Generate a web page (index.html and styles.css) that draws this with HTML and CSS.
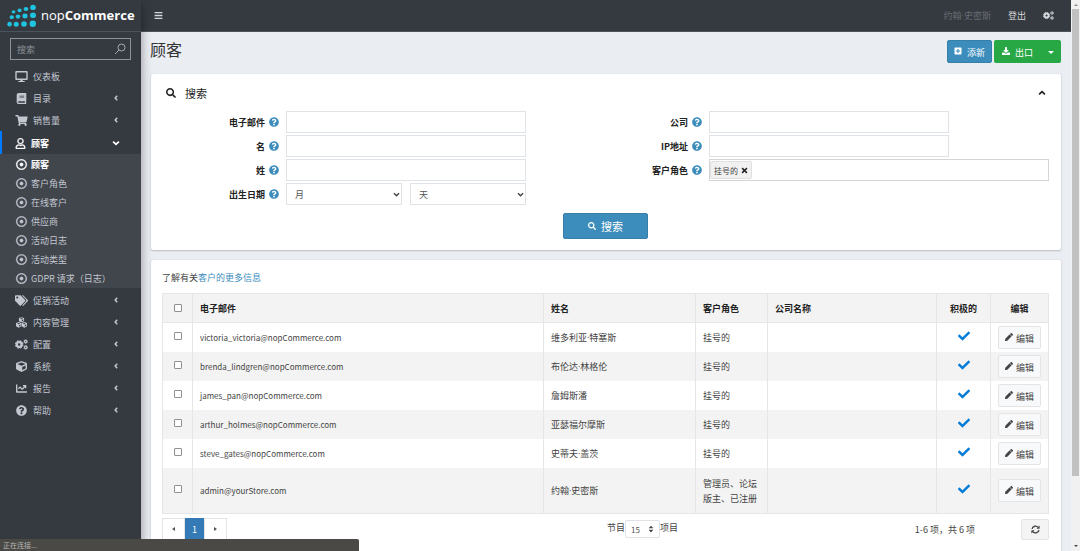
FILE: index.html
```html
<!DOCTYPE html>
<html lang="zh-CN">

<head>
    <meta charset="UTF-8">
    <meta name="viewport" content="width=device-width, initial-scale=1.0">
    <title>顾客 / nopCommerce</title>

    <link rel="stylesheet" href="styles.css">
</head>

<body>

    <!-- icons -->
    <svg class="sprite" aria-hidden="true">
        <symbol id="i-search" viewBox="0 0 512 512"><path d="M505 442.7L405.3 343c-4.5-4.5-10.6-7-17-7H372c27.6-35.3 44-79.7 44-128C416 93.1 322.9 0 208 0S0 93.1 0 208s93.1 208 208 208c48.3 0 92.7-16.4 128-44v16.3c0 6.4 2.5 12.5 7 17l99.7 99.7c9.4 9.4 24.6 9.4 33.9 0l28.3-28.3c9.4-9.4 9.4-24.6.1-34zM208 336c-70.7 0-128-57.2-128-128 0-70.7 57.2-128 128-128 70.7 0 128 57.2 128 128 0 70.7-57.2 128-128 128z"/></symbol>
        <symbol id="i-help" viewBox="0 0 512 512"><path d="M504 256c0 136.997-111.043 248-248 248S8 392.997 8 256C8 119.083 119.043 8 256 8s248 111.083 248 248zM262.655 90c-54.497 0-89.255 22.957-116.549 63.758-3.536 5.286-2.353 12.415 2.715 16.258l34.699 26.31c5.205 3.947 12.621 3.008 16.665-2.122 17.864-22.658 30.113-35.797 57.303-35.797 20.429 0 45.698 13.148 45.698 32.958 0 14.976-12.363 22.667-32.534 33.976C247.128 238.528 216 254.941 216 296v4c0 6.627 5.373 12 12 12h56c6.627 0 12-5.373 12-12v-1.333c0-28.462 83.186-29.647 83.186-106.667 0-58.002-60.165-102-116.531-102zM256 338c-25.365 0-46 20.635-46 46 0 25.364 20.635 46 46 46s46-20.636 46-46c0-25.365-20.635-46-46-46z"/></symbol>
        <symbol id="i-check" viewBox="0 0 512 512"><path d="M173.898 439.404l-166.4-166.4c-9.997-9.997-9.997-26.206 0-36.204l36.203-36.204c9.997-9.998 26.207-9.998 36.204 0L192 312.69 432.095 72.596c9.997-9.997 26.207-9.997 36.204 0l36.203 36.204c9.997 9.997 9.997 26.206 0 36.204l-294.4 294.401c-9.998 9.997-26.207 9.997-36.204-.001z"/></symbol>
        <symbol id="i-dot" viewBox="0 0 512 512"><path d="M256 56c110.532 0 200 89.451 200 200 0 110.532-89.451 200-200 200-110.532 0-200-89.451-200-200 0-110.532 89.451-200 200-200m0-48C119.033 8 8 119.033 8 256s111.033 248 248 248 248-111.033 248-248S392.967 8 256 8zm0 168c-44.183 0-80 35.817-80 80s35.817 80 80 80 80-35.817 80-80-35.817-80-80-80z" stroke="currentColor" stroke-width="14"/></symbol>
        <symbol id="i-bars" viewBox="0 0 448 512"><path d="M16 60h416q16 0 16 16v40q0 16-16 16H16q-16 0-16-16V76q0-16 16-16zm0 160h416q16 0 16 16v40q0 16-16 16H16q-16 0-16-16v-40q0-16 16-16zm0 160h416q16 0 16 16v40q0 16-16 16H16q-16 0-16-16v-40q0-16 16-16z"/></symbol>
        <symbol id="i-desktop" viewBox="0 0 576 512"><path d="M528 0H48C21.5 0 0 21.5 0 48v320c0 26.5 21.5 48 48 48h192l-16 48h-72c-13.3 0-24 10.7-24 24s10.7 24 24 24h272c13.3 0 24-10.7 24-24s-10.7-24-24-24h-72l-16-48h192c26.5 0 48-21.5 48-48V48c0-26.5-21.5-48-48-48zm-16 352H64V64h448v288z"/></symbol>
        <symbol id="i-book" viewBox="0 0 448 512"><path d="M448 360V24c0-13.3-10.7-24-24-24H96C43 0 0 43 0 96v320c0 53 43 96 96 96h328c13.3 0 24-10.7 24-24v-16c0-7.5-3.5-14.3-8.9-18.7-4.2-15.4-4.2-59.3 0-74.7 5.4-4.3 8.9-11.1 8.9-18.6zM128 134c0-3.3 2.7-6 6-6h212c3.3 0 6 2.7 6 6v20c0 3.3-2.7 6-6 6H134c-3.3 0-6-2.7-6-6v-20zm0 64c0-3.3 2.7-6 6-6h212c3.3 0 6 2.7 6 6v20c0 3.3-2.7 6-6 6H134c-3.3 0-6-2.7-6-6v-20zm253.4 250H96c-17.7 0-32-14.3-32-32 0-17.6 14.4-32 32-32h285.4c-1.9 17.1-1.9 46.9 0 64z"/></symbol>
        <symbol id="i-cart" viewBox="0 0 576 512"><path d="M528.12 301.319l47.273-208C578.806 78.301 567.391 64 551.99 64H159.208l-9.166-44.81C147.758 8.021 137.93 0 126.529 0H24C10.745 0 0 10.745 0 24v16c0 13.255 10.745 24 24 24h69.883l70.248 343.435C147.325 417.1 136 435.222 136 456c0 30.928 25.072 56 56 56s56-25.072 56-56c0-15.674-6.447-29.835-16.824-40h209.647C430.447 426.165 424 440.326 424 456c0 30.928 25.072 56 56 56s56-25.072 56-56c0-22.172-12.888-41.332-31.579-50.405l5.517-24.276c3.413-15.018-8.002-29.319-23.403-29.319H218.117l-6.545-32h293.145c11.206 0 20.92-7.754 23.403-18.681z"/></symbol>
        <symbol id="i-user" viewBox="0 0 448 512"><path d="M313.6 304c-28.7 0-42.5 16-89.6 16-47.1 0-60.8-16-89.6-16C60.2 304 0 364.2 0 438.4V464c0 26.5 21.5 48 48 48h352c26.5 0 48-21.5 48-48v-25.6c0-74.2-60.2-134.4-134.4-134.4zM400 464H48v-25.6c0-47.6 38.8-86.4 86.4-86.4 14.6 0 38.3 16 89.6 16 51.7 0 74.9-16 89.6-16 47.6 0 86.4 38.8 86.4 86.4V464zM224 288c79.5 0 144-64.5 144-144S303.5 0 224 0 80 64.5 80 144s64.5 144 144 144zm0-240c52.9 0 96 43.1 96 96s-43.1 96-96 96-96-43.1-96-96 43.1-96 96-96z" stroke="currentColor" stroke-width="16"/></symbol>
        <symbol id="i-tags" viewBox="0 0 640 512"><path d="M497.941 225.941L286.059 14.059A48 48 0 0 0 252.118 0H48C21.49 0 0 21.49 0 48v204.118a48 48 0 0 0 14.059 33.941l211.882 211.882c18.744 18.745 49.136 18.746 67.882 0l204.118-204.118c18.745-18.745 18.745-49.137 0-67.882zM112 160c-26.51 0-48-21.49-48-48s21.49-48 48-48 48 21.49 48 48-21.49 48-48 48zm513.941 133.823L421.823 497.941c-18.745 18.745-49.137 18.745-67.882 0l-.36-.36L527.64 323.522c16.999-16.999 26.362-39.6 26.362-63.64s-9.362-46.641-26.362-63.64L331.397 0h48.721a48 48 0 0 1 33.941 14.059l211.882 211.882c18.745 18.745 18.745 49.137 0 67.882z"/></symbol>
        <symbol id="i-cube" viewBox="0 0 512 512"><path d="M239.1 6.3l-208 78c-18.7 7-31.1 25-31.1 45v225.1c0 18.2 10.3 34.8 26.5 42.9l208 104c13.5 6.8 29.4 6.8 42.9 0l208-104c16.3-8.1 26.5-24.8 26.5-42.9V129.3c0-20-12.4-37.9-31.1-44.9l-208-78C262 2.2 250 2.2 239.1 6.3zM256 68.4l192 72v1.1l-192 78-192-78v-1.1l192-72zm32 356V275.5l160-65v133.9l-160 80z"/></symbol>
        <symbol id="i-cubes" viewBox="0 0 512 512">
            <path fill-rule="evenodd" d="M256 6l120 46v140l-120 56-120-56V52zM256 48l-70 26 70 28 70-28zM276 200l62-30V110l-62 26zM124 232l124 50v150L124 496 0 432V282zM124 276l-72 28 72 30 72-30zM146 444l64-32v-66l-64 28zM388 232l124 50v150l-124 64-124-64V282zM388 276l-72 28 72 30 72-30zM410 444l64-32v-66l-64 28z"/>
        </symbol>
        <symbol id="i-cogs" viewBox="0 0 640 512">
            <g fill="none" stroke="currentColor">
                <circle cx="206" cy="256" r="116" stroke-width="110"/>
                <circle cx="206" cy="256" r="180" stroke-width="56" stroke-dasharray="90 51.4"/>
                <circle cx="524" cy="112" r="62" stroke-width="56"/>
                <circle cx="524" cy="112" r="96" stroke-width="32" stroke-dasharray="56 44.500"/>
                <circle cx="524" cy="400" r="62" stroke-width="56"/>
                <circle cx="524" cy="400" r="96" stroke-width="32" stroke-dasharray="56 44.500"/>
            </g>
        </symbol>
        <symbol id="i-chart" viewBox="0 0 512 512"><path d="M496 384H64V80c0-8.84-7.16-16-16-16H16C7.16 64 0 71.16 0 80v336c0 17.67 14.33 32 32 32h464c8.84 0 16-7.16 16-16v-32c0-8.84-7.16-16-16-16zM464 96H345.94c-21.38 0-32.09 25.85-16.97 40.97l32.4 32.4L288 242.75l-73.37-73.37c-12.5-12.5-32.76-12.5-45.25 0l-68.69 68.69c-6.25 6.25-6.25 16.38 0 22.63l22.62 22.62c6.25 6.25 16.38 6.25 22.63 0L192 237.25l73.37 73.37c12.5 12.5 32.76 12.5 45.25 0l96-96 32.4 32.4c15.12 15.12 40.97 4.41 40.97-16.97V112c.01-8.84-7.15-16-15.99-16z"/></symbol>
        <symbol id="i-pencil" viewBox="0 0 512 512"><path d="M497.9 142.1l-46.1 46.1c-4.7 4.7-12.3 4.7-17 0l-111-111c-4.7-4.7-4.7-12.3 0-17l46.1-46.1c18.7-18.7 49.1-18.7 67.9 0l60.1 60.1c18.8 18.7 18.8 49.1 0 67.9zM284.2 99.8L21.6 362.4.4 483.9c-2.9 16.4 11.4 30.6 27.8 27.8l121.5-21.3 262.6-262.6c4.7-4.7 4.7-12.3 0-17l-111-111c-4.8-4.7-12.4-4.7-17.1 0z"/></symbol>
        <symbol id="i-plus" viewBox="0 0 448 512"><path fill-rule="evenodd" d="M48 32h352q48 0 48 48v352q0 48-48 48H48q-48 0-48-48V80q0-48 48-48zm140 92v96H92v72h96v96h72v-96h96v-72h-96v-96z"/></symbol>
        <symbol id="i-download" viewBox="0 0 512 512"><path d="M216 0h80q24 0 24 24v168h88q26 0 11 31L271 371q-15 13-30 0L93 223q-15-31 11-31h88V24q0-24 24-24zM24 352h123l49 49q60 50 120 0l49-49h123q24 0 24 24v112q0 24-24 24H24q-24 0-24-24V376q0-24 24-24z"/></symbol>
        <symbol id="i-left" viewBox="0 0 256 512"><path d="M206 116L76 256l130 140" fill="none" stroke="currentColor" stroke-width="96"/></symbol>
        <symbol id="i-down" viewBox="0 0 512 512"><path d="M70 170l186 176 186-176" fill="none" stroke="currentColor" stroke-width="110"/></symbol>
        <symbol id="i-up" viewBox="0 0 512 512"><path d="M70 346l186-176 186 176" fill="none" stroke="currentColor" stroke-width="110"/></symbol>
        <symbol id="i-times" viewBox="0 0 512 512"><path d="M80 80l352 352M432 80L80 432" fill="none" stroke="currentColor" stroke-width="110"/></symbol>
        <symbol id="i-sync" viewBox="0 0 512 512"><path d="M60 226A198 198 0 0 1 410 138M452 286A198 198 0 0 1 102 374" fill="none" stroke="currentColor" stroke-width="80"/><path d="M490 30v180H310zM22 482V302h180z"/></symbol>
        <symbol id="i-sort" viewBox="0 0 320 512"><path d="M160 40l150 170H10zM160 472L10 302h300z"/></symbol>
    </svg>

    <div class="wrapper">

        <!-- sidebar -->
        <aside class="sidebar">
            <a class="brand" href="#">
                <svg class="brand-mark" viewBox="0 0 30 24" aria-hidden="true">
                    <g fill="#1fc3df">
                        <ellipse cx="6.5" cy="7.8" rx="1.900" ry="1.600"/><ellipse cx="12.6" cy="6.4" rx="2.1" ry="1.800"/><ellipse cx="19" cy="5" rx="2.400" ry="2.1"/><ellipse cx="26" cy="3.4" rx="2.800" ry="2.600"/>
                        <ellipse cx="4.8" cy="13.200" rx="2.1" ry="1.900"/><ellipse cx="11" cy="12.6" rx="2.300" ry="2.1"/><ellipse cx="18" cy="12" rx="2.600" ry="2.400"/><ellipse cx="26" cy="11.2" rx="3" ry="2.800"/>
                        <ellipse cx="2.6" cy="20.200" rx="2.300" ry="2.400"/><ellipse cx="9.2" cy="20.200" rx="2.500" ry="2.500"/><ellipse cx="17" cy="20" rx="2.800" ry="2.800"/><ellipse cx="25.8" cy="19.800" rx="3.200" ry="3.200"/>
                    </g>
                </svg>
                <span>nop<b>Commerce</b></span>
            </a>

            <form class="side-search">
                <input type="text" placeholder="搜索" aria-label="搜索">
                <svg viewBox="0 0 12 12" aria-hidden="true"><path d="M1 11l4-4M11 4.500a3.500 3.500 0 1 1-7 0a3.500 3.500 0 0 1 7 0z" fill="none" stroke="currentColor"/></svg>
            </form>

            <nav>
                <ul class="menu">
                    <li><a href="#"><svg class="icon"><use href="#i-desktop"/></svg>仪表板</a></li>
                    <li><a href="#"><svg class="icon"><use href="#i-book"/></svg>目录<svg class="arrow"><use href="#i-left"/></svg></a></li>
                    <li><a href="#"><svg class="icon"><use href="#i-cart"/></svg>销售量<svg class="arrow"><use href="#i-left"/></svg></a></li>
                    <li class="open">
                        <a href="#"><svg class="icon"><use href="#i-user"/></svg>顾客<svg class="arrow"><use href="#i-down"/></svg></a>
                        <ul class="submenu">
                            <li class="active"><a href="#"><svg class="icon"><use href="#i-dot"/></svg>顾客</a></li>
                            <li><a href="#"><svg class="icon"><use href="#i-dot"/></svg>客户角色</a></li>
                            <li><a href="#"><svg class="icon"><use href="#i-dot"/></svg>在线客户</a></li>
                            <li><a href="#"><svg class="icon"><use href="#i-dot"/></svg>供应商</a></li>
                            <li><a href="#"><svg class="icon"><use href="#i-dot"/></svg>活动日志</a></li>
                            <li><a href="#"><svg class="icon"><use href="#i-dot"/></svg>活动类型</a></li>
                            <li><a href="#"><svg class="icon"><use href="#i-dot"/></svg>GDPR 请求（日志）</a></li>
                        </ul>
                    </li>
                    <li><a href="#"><svg class="icon"><use href="#i-tags"/></svg>促销活动<svg class="arrow"><use href="#i-left"/></svg></a></li>
                    <li><a href="#"><svg class="icon"><use href="#i-cubes"/></svg>内容管理<svg class="arrow"><use href="#i-left"/></svg></a></li>
                    <li><a href="#"><svg class="icon"><use href="#i-cogs"/></svg>配置<svg class="arrow"><use href="#i-left"/></svg></a></li>
                    <li><a href="#"><svg class="icon"><use href="#i-cube"/></svg>系统<svg class="arrow"><use href="#i-left"/></svg></a></li>
                    <li><a href="#"><svg class="icon"><use href="#i-chart"/></svg>报告<svg class="arrow"><use href="#i-left"/></svg></a></li>
                    <li><a href="#"><svg class="icon"><use href="#i-help"/></svg>帮助<svg class="arrow"><use href="#i-left"/></svg></a></li>
                </ul>
            </nav>
        </aside>

        <div class="page">
            <header class="topbar">
                <button type="button" class="plain" aria-label="菜单"><svg class="icon"><use href="#i-bars"/></svg></button>
                <span class="who name">约翰·史密斯</span>
                <a href="#">登出</a>
                <button type="button" class="plain" aria-label="设置"><svg class="icon"><use href="#i-cogs"/></svg></button>
            </header>

            <main>
                <div class="content-header">
                    <h1>顾客</h1>
                    <button type="button" class="btn blue"><svg class="icon"><use href="#i-plus"/></svg>添新</button>
                    <div class="btn-group">
                        <button type="button" class="btn green"><svg class="icon"><use href="#i-download"/></svg>出口</button>
                        <button type="button" class="btn green toggle" aria-label="更多"><i class="caret"></i></button>
                    </div>
                </div>

                <!-- search panel -->
                <section class="card search-card">
                    <div class="card-title">
                        <svg class="icon"><use href="#i-search"/></svg>
                        <h2>搜索</h2>
                        <button type="button" class="plain" aria-label="收起"><svg class="icon"><use href="#i-up"/></svg></button>
                    </div>

                    <form>
                        <div class="fields">
                            <div class="col">
                                <div class="field"><label for="email">电子邮件</label><svg class="icon"><use href="#i-help"/></svg><input type="text" id="email"></div>
                                <div class="field"><label for="fname">名</label><svg class="icon"><use href="#i-help"/></svg><input type="text" id="fname"></div>
                                <div class="field"><label for="lname">姓</label><svg class="icon"><use href="#i-help"/></svg><input type="text" id="lname"></div>
                                <div class="field">
                                    <label for="month">出生日期</label><svg class="icon"><use href="#i-help"/></svg>
                                    <div class="dates">
                                        <div class="select"><select id="month"><option>月</option></select><svg><use href="#i-down"/></svg></div>
                                        <div class="select"><select aria-label="天"><option>天</option></select><svg><use href="#i-down"/></svg></div>
                                    </div>
                                </div>
                            </div>
                            <div class="col">
                                <div class="field"><label for="company">公司</label><svg class="icon"><use href="#i-help"/></svg><input type="text" id="company"></div>
                                <div class="field"><label for="ip">IP地址</label><svg class="icon"><use href="#i-help"/></svg><input type="text" id="ip"></div>
                                <div class="field">
                                    <label for="roles">客户角色</label><svg class="icon"><use href="#i-help"/></svg>
                                    <div class="multi">
                                        <span class="tag">挂号的<button type="button" class="plain" aria-label="移除"><svg><use href="#i-times"/></svg></button></span>
                                        <input type="text" id="roles">
                                    </div>
                                </div>
                            </div>
                        </div>
                        <button type="button" class="btn blue big"><svg class="icon"><use href="#i-search"/></svg>搜索</button>
                    </form>
                </section>

                <!-- customers grid -->
                <section class="card">
                    <p>了解有关<a href="#">客户的更多信息</a></p>

                    <table>
                        <colgroup>
                            <col class="c-check"><col><col class="c-name"><col class="c-role"><col class="c-company"><col class="c-active"><col class="c-edit">
                        </colgroup>
                        <thead>
                            <tr>
                                <th class="mid"><input type="checkbox" aria-label="全选"></th>
                                <th>电子邮件</th>
                                <th>姓名</th>
                                <th>客户角色</th>
                                <th>公司名称</th>
                                <th class="mid">积极的</th>
                                <th class="mid">编辑</th>
                            </tr>
                        </thead>
                        <tbody>
                            <tr>
                                <td class="mid"><input type="checkbox" aria-label="选择"></td>
                                <td class="mail">victoria_victoria@nopCommerce.com</td>
                                <td class="name">维多利亚·特塞斯</td>
                                <td>挂号的</td>
                                <td></td>
                                <td class="mid"><svg class="tick"><use href="#i-check"/></svg></td>
                                <td class="mid"><button type="button" class="btn light"><svg class="icon"><use href="#i-pencil"/></svg>编辑</button></td>
                            </tr>
                            <tr>
                                <td class="mid"><input type="checkbox" aria-label="选择"></td>
                                <td class="mail">brenda_lindgren@nopCommerce.com</td>
                                <td class="name">布伦达·林格伦</td>
                                <td>挂号的</td>
                                <td></td>
                                <td class="mid"><svg class="tick"><use href="#i-check"/></svg></td>
                                <td class="mid"><button type="button" class="btn light"><svg class="icon"><use href="#i-pencil"/></svg>编辑</button></td>
                            </tr>
                            <tr>
                                <td class="mid"><input type="checkbox" aria-label="选择"></td>
                                <td class="mail">james_pan@nopCommerce.com</td>
                                <td class="name">詹姆斯潘</td>
                                <td>挂号的</td>
                                <td></td>
                                <td class="mid"><svg class="tick"><use href="#i-check"/></svg></td>
                                <td class="mid"><button type="button" class="btn light"><svg class="icon"><use href="#i-pencil"/></svg>编辑</button></td>
                            </tr>
                            <tr>
                                <td class="mid"><input type="checkbox" aria-label="选择"></td>
                                <td class="mail">arthur_holmes@nopCommerce.com</td>
                                <td class="name">亚瑟福尔摩斯</td>
                                <td>挂号的</td>
                                <td></td>
                                <td class="mid"><svg class="tick"><use href="#i-check"/></svg></td>
                                <td class="mid"><button type="button" class="btn light"><svg class="icon"><use href="#i-pencil"/></svg>编辑</button></td>
                            </tr>
                            <tr>
                                <td class="mid"><input type="checkbox" aria-label="选择"></td>
                                <td class="mail">steve_gates@nopCommerce.com</td>
                                <td class="name">史蒂夫·盖茨</td>
                                <td>挂号的</td>
                                <td></td>
                                <td class="mid"><svg class="tick"><use href="#i-check"/></svg></td>
                                <td class="mid"><button type="button" class="btn light"><svg class="icon"><use href="#i-pencil"/></svg>编辑</button></td>
                            </tr>
                            <tr>
                                <td class="mid"><input type="checkbox" aria-label="选择"></td>
                                <td class="mail">admin@yourStore.com</td>
                                <td class="name">约翰·史密斯</td>
                                <td>管理员、论坛版主、已注册</td>
                                <td></td>
                                <td class="mid"><svg class="tick"><use href="#i-check"/></svg></td>
                                <td class="mid"><button type="button" class="btn light"><svg class="icon"><use href="#i-pencil"/></svg>编辑</button></td>
                            </tr>
                        </tbody>
                    </table>

                    <div class="grid-footer">
                        <div class="pager">
                            <button type="button" aria-label="上一页"><i class="prev"></i></button>
                            <button type="button" class="current">1</button>
                            <button type="button" aria-label="下一页"><i class="next"></i></button>
                        </div>
                        <div class="length">
                            <label for="size">节目</label>
                            <div class="select size"><select id="size"><option>15</option></select><svg><use href="#i-sort"/></svg></div>
                            <span>项目</span>
                        </div>
                        <div class="info">1-6 项，共 6 项</div>
                        <button type="button" class="btn light refresh" aria-label="刷新"><svg class="icon"><use href="#i-sync"/></svg></button>
                    </div>
                </section>
            </main>
        </div>
    </div>

    <div class="scrollbar" aria-hidden="true"><i class="tri-up"></i><span></span><i class="tri-down"></i></div>
    <div class="status">正在连接...</div>

</body>

</html>
```
FILE: styles.css
```css
* {
    box-sizing: border-box;
}

html {
    scrollbar-width: none;
}

body {
    margin: 0;
    font: 9px/15px "Noto Sans CJK SC", sans-serif;
    color: #444;
    background-color: #eaedf2;
}

input,
select,
button {
    font: inherit;
    color: inherit;
    margin: 0;
}

button {
    cursor: pointer;
}

svg {
    fill: currentColor;
    flex: none;
}

.sprite {
    position: absolute;
    width: 0;
    height: 0;
}

.icon {
    width: 9px;
    height: 9px;
}

.plain {
    display: flex;
    padding: 0;
    border: 0;
    background: none;
}

.wrapper {
    display: flex;
    min-height: 100vh;
    padding-right: 9px;
}

/* sidebar */
.sidebar {
    position: relative;
    z-index: 1;
    flex: none;
    width: 141px;
    color: #c2c7d0;
    background-color: #353a41;
    box-shadow: 0 4px 10px rgba(0, 0, 0, 0.4);
}

.sidebar a {
    color: inherit;
    text-decoration: none;
}

.brand {
    display: flex;
    align-items: center;
    gap: 4px;
    height: 32px;
    padding-left: 7px;
    border-bottom: 1px solid #4b545c;
}

.sidebar .brand {
    color: #fff;
    font: 13px/20px "Open Sans", sans-serif;
}

.brand span {
    padding-bottom: 2px;
}

.brand-mark {
    width: 30px;
    height: 24px;
}

.side-search {
    display: flex;
    align-items: center;
    height: 22px;
    margin: 6px 10px 5px;
    padding-right: 4px;
    border: 1px solid #8f9398;
}

.side-search input {
    flex: 1;
    min-width: 0;
    padding: 0 6px;
    border: 0;
    background: none;
}

.side-search input::placeholder {
    color: #8d9196;
}

.side-search svg {
    width: 12px;
    height: 12px;
    color: #a5a8ac;
}

ul {
    margin: 0;
    padding: 0;
    list-style: none;
}

.menu a {
    display: flex;
    align-items: center;
    height: 22px;
    padding: 1px 21px 0 15px;
}

.menu .icon {
    width: 13px;
    height: 11px;
    margin-right: 5px;
}

.menu .arrow {
    width: 8px;
    height: 8px;
    margin-left: auto;
    margin-bottom: 2px;
}

.menu .open > a {
    height: 23px;
    padding-left: 12px;
    border-left: 2px solid #007bff;
    color: #fff;
    font-weight: bold;
}

.menu .open .arrow {
    margin-bottom: 0;
}

.menu .open > a .icon {
    margin-right: 4px;
}

.menu .submenu {
    margin-bottom: 1px;
    background-color: #41454c;
    padding-bottom: 1px;
}

.menu .submenu a {
    height: 19px;
}

.submenu .icon {
    margin-right: 3px;
}

.submenu .active {
    color: #fff;
    font-weight: bold;
}

/* top bar */
.page {
    flex: 1;
    min-width: 0;
}

.topbar {
    display: flex;
    align-items: center;
    gap: 17px;
    height: 32px;
    padding: 0 17px 0 12px;
    color: #d5d7d9;
    background-color: #353a41;
    border-bottom: 1px solid #4b545c;
}

.topbar .icon {
    width: 11px;
    height: 9px;
}

.topbar a {
    color: inherit;
    text-decoration: none;
}

.name {
    font-family: "Open Sans", "Noto Sans CJK SC", sans-serif;
}

.who {
    margin-left: auto;
    color: #686c71;
}

main {
    padding: 0 10px 10px;
}

.content-header {
    display: flex;
    align-items: center;
    gap: 2px;
    height: 42px;
    padding-bottom: 3px;
}

h1 {
    flex: 1;
    margin: 0 0 5px -1px;
    font-size: 16px;
    line-height: 24px;
    font-weight: normal;
    color: #333;
}

/* buttons */
.btn {
    display: inline-flex;
    align-items: center;
    justify-content: center;
    gap: 5px;
    height: 23px;
    padding: 1px 6px 0;
    border: 1px solid transparent;
    border-radius: 2px;
}

.btn .icon {
    width: 8px;
    height: 8px;
    margin-bottom: 2px;
}

.blue {
    color: #fff;
    background-color: #3c8dbc;
    border-color: #367fa9;
}

.green {
    color: #fff;
    background-color: #28a745;
}

.light {
    gap: 3px;
    color: #444;
    background-color: #f8f9fa;
    border-color: #e4e4e4;
}

.big {
    display: flex;
    width: 85px;
    height: 26px;
    margin: 8px auto 0;
    font-size: 11px;
}

.btn-group {
    display: flex;
}

.btn-group .btn:first-child {
    width: 47px;
    border-radius: 2px 0 0 2px;
}

.btn-group .toggle {
    width: 20px;
    border-radius: 0 2px 2px 0;
}

.caret {
    border: 3px solid transparent;
    border-top-color: #fff;
    border-bottom: 0;
}

/* cards */
.card {
    margin-bottom: 10px;
    padding: 10px 12px 11px 11px;
    background-color: #fff;
    border-radius: 2px;
    box-shadow: 0 0 1px rgba(0, 0, 0, 0.15), 0 1px 2px rgba(0, 0, 0, 0.2);
}

.card-title {
    display: flex;
    align-items: center;
    gap: 9px;
    height: 18px;
    margin-bottom: 9px;
    padding: 0 3px 0 4px;
    color: #222;
}

.card-title .icon {
    width: 10px;
    height: 10px;
}

.card-title .plain .icon {
    width: 8px;
    height: 8px;
}

h2 {
    flex: 1;
    margin: 0;
    font-size: 11px;
    line-height: 18px;
    font-weight: normal;
}

.fields {
    display: grid;
    grid-template-columns: 423fr 464fr;
}

.col {
    display: flex;
    flex-direction: column;
    gap: 2px;
}

.field {
    display: grid;
    grid-template-columns: 103px 10px 1fr;
    align-items: center;
    height: 22px;
    column-gap: 4px;
}

.field label {
    font-weight: bold;
    color: #222;
    text-align: right;
}

.field > .icon {
    width: 10px;
    height: 10px;
    color: #3c8dbc;
}

.field > input,
.select select {
    height: 22px;
    border: 1px solid #dfe2e6;
    background-color: #fff;
}

.field > input,
.dates,
.multi {
    margin-left: 3px;
}

.field > input,
.dates {
    width: 240px;
}

.dates {
    display: flex;
    gap: 8px;
}

.select {
    position: relative;
    flex: 1;
}

.select select {
    appearance: none;
    width: 100%;
    padding: 0 8px;
    color: #555;
}

.select svg {
    position: absolute;
    top: 8px;
    right: 2px;
    width: 7px;
    height: 7px;
    pointer-events: none;
}

.multi {
    display: flex;
    align-items: center;
    height: 22px;
    border: 1px solid #d5d5d5;
}

.multi input {
    flex: 1;
    min-width: 0;
    height: 18px;
    border: 0;
    background: none;
}

.tag {
    display: flex;
    align-items: center;
    gap: 3px;
    height: 18px;
    padding: 0 3px;
    font-size: 8px;
    background-color: #f1f1f1;
    border: 1px solid #e0e0e0;
    border-radius: 2px;
}

.tag svg {
    width: 7px;
    height: 7px;
    color: #222;
}

/* table */
p {
    margin: 0 0 8px;
}

p a {
    color: #3c8dbc;
    text-decoration: none;
}

table {
    width: 100%;
    table-layout: fixed;
    border-collapse: collapse;
    border: 1px solid #e6e6e6;
}

th,
td {
    height: 29px;
    padding: 1px 7px 0;
    text-align: left;
    border-left: 1px solid #e6e6e6;
}

th {
    padding-top: 0;
    color: #222;
    background-color: #f3f3f3;
    border-bottom: 1px solid #e6e6e6;
}

tbody tr:nth-child(even) {
    background-color: #f3f3f3;
}

tbody tr:last-child td {
    height: 46px;
}

.mail {
    font-size: 8px;
}

th.mid,
td.mid {
    padding-left: 0;
    padding-right: 0;
    text-align: center;
}

.c-check {
    width: 30px;
}

.c-name {
    width: 152px;
}

.c-role {
    width: 72px;
}

.c-company {
    width: 169px;
}

.c-active {
    width: 54px;
}

.c-edit {
    width: 58px;
}

input[type="checkbox"] {
    appearance: none;
    display: block;
    width: 8px;
    height: 8px;
    margin: 0 auto;
    background-color: #fff;
    border: 1px solid #909090;
    border-radius: 1px;
}

td input[type="checkbox"],
.tick {
    margin: 0 auto 3px;
}

.tick {
    display: block;
    width: 12px;
    height: 12px;
    color: #007bd8;
}

td .btn {
    vertical-align: middle;
}

/* footer under the table */
.grid-footer {
    display: grid;
    grid-template-columns: 258fr 258fr 297fr 74fr;
    align-items: center;
    height: 30px;
}

.pager {
    display: flex;
    height: 22px;
}

.pager button {
    display: flex;
    align-items: center;
    justify-content: center;
    width: 23px;
    padding: 0;
    border: 1px solid #e4e4e4;
    background-color: #fff;
}

.pager .current {
    width: 19px;
    color: #fff;
    background-color: #337ab7;
    border-color: #337ab7;
}

.prev,
.next {
    border: 2px solid transparent;
}

.prev {
    border-right: 3px solid #555;
    border-left: 0;
}

.next {
    border-left: 3px solid #555;
    border-right: 0;
}

.length {
    display: flex;
    justify-content: flex-end;
}

.size {
    flex: none;
    width: 35px;
}

.size select {
    height: 18px;
    padding: 0 5px;
    font-size: 8px;
    border-radius: 2px;
}

.size svg {
    top: 5px;
    right: 6px;
    width: 6px;
    height: 8px;
}

.info {
    text-align: right;
}

.refresh {
    justify-self: end;
    width: 28px;
    height: 21px;
    background-color: #f4f4f4;
}

.btn.refresh .icon {
    width: 9px;
    height: 9px;
    margin: 0;
}

/* window chrome over the page */
.scrollbar {
    position: fixed;
    top: 0;
    right: 0;
    bottom: 0;
    z-index: 2;
    display: flex;
    flex-direction: column;
    align-items: center;
    width: 9px;
    padding: 4px 0;
    background-color: #f1f1f1;
}

.scrollbar span {
    width: 7px;
    height: 86%;
    margin: 3px 0 auto;
    background-color: #c1c1c1;
}

.tri-up,
.tri-down {
    border: 2px solid transparent;
}

.tri-up {
    border-bottom-color: #888;
    border-top: 0;
}

.tri-down {
    border-top-color: #444;
    border-bottom: 0;
}

.status {
    position: fixed;
    left: 0;
    bottom: 0;
    z-index: 3;
    width: 359px;
    height: 12px;
    padding-left: 3px;
    font-size: 7px;
    line-height: 12px;
    color: #b5b5b3;
    background-color: #4a4946;
    border-top-right-radius: 2px;
}
```
